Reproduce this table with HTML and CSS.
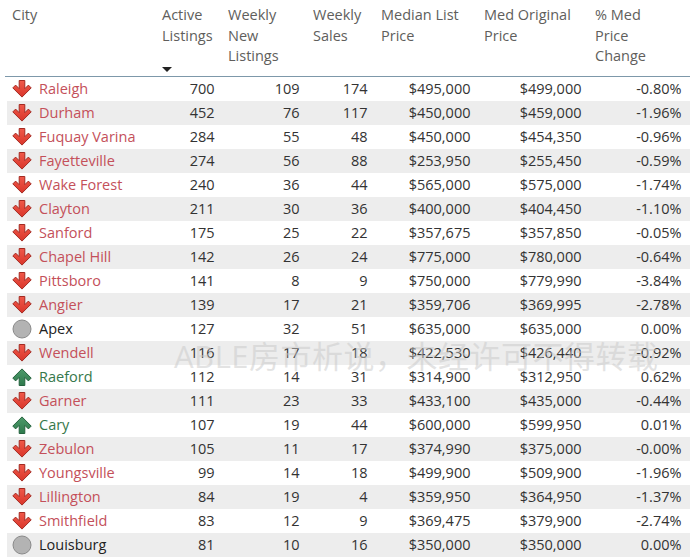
FILE: index.html
```html
<!DOCTYPE html>
<html>
<head>
<meta charset="utf-8">
<link rel="stylesheet" href="styles.css">
</head>
<body>
<svg width="0" height="0" class="defs">
  <defs>
    <linearGradient id="gr" x1="0" y1="0" x2="0" y2="1"><stop offset="0" stop-color="#f0594a"/><stop offset="1" stop-color="#d9352a"/></linearGradient>
    <linearGradient id="gg" x1="0" y1="0" x2="0" y2="1"><stop offset="0" stop-color="#4d9a6a"/><stop offset="1" stop-color="#2e7a4c"/></linearGradient>
    <symbol id="down" viewBox="0 0 20 20"><path d="M7.2 1.5h5.6v8.2l3.6-3.6 2.8 2.8L10 18.1 0.8 8.9l2.8-2.8 3.6 3.6z" fill="url(#gr)" stroke="#a32a22" stroke-width="1" stroke-linejoin="round"/></symbol>
    <symbol id="up" viewBox="0 0 20 20"><path d="M7.2 18.5h5.6v-8.2l3.6 3.6 2.8-2.8L10 1.9 0.8 11.1l2.8 2.8 3.6-3.6z" fill="url(#gg)" stroke="#24623d" stroke-width="1" stroke-linejoin="round"/></symbol>
    <symbol id="dot" viewBox="0 0 20 20"><circle cx="10" cy="10" r="9" fill="#b3b3b3" stroke="#8a8a8a" stroke-width="1"/></symbol>
  </defs>
</svg>
<div class="wrap">
  <div class="table">
    <div class="head">
      <div class="hc">City</div>
      <div class="hc">Active Listings<span class="sort"></span></div>
      <div class="hc">Weekly New Listings</div>
      <div class="hc">Weekly Sales</div>
      <div class="hc">Median List Price</div>
      <div class="hc">Med Original Price</div>
      <div class="hc narrow">% Med Price Change</div>
    </div>
    <div id="rows"></div>
  </div>
  <div class="watermark">ABLE房市析说，未经许可不得转载</div>
</div>
<script src="script.js"></script>
</body>
</html>
```
FILE: script.js
```js
const data = [
["d","Raleigh",700,109,174,"$495,000","$499,000","-0.80%"],
["d","Durham",452,76,117,"$450,000","$459,000","-1.96%"],
["d","Fuquay Varina",284,55,48,"$450,000","$454,350","-0.96%"],
["d","Fayetteville",274,56,88,"$253,950","$255,450","-0.59%"],
["d","Wake Forest",240,36,44,"$565,000","$575,000","-1.74%"],
["d","Clayton",211,30,36,"$400,000","$404,450","-1.10%"],
["d","Sanford",175,25,22,"$357,675","$357,850","-0.05%"],
["d","Chapel Hill",142,26,24,"$775,000","$780,000","-0.64%"],
["d","Pittsboro",141,8,9,"$750,000","$779,990","-3.84%"],
["d","Angier",139,17,21,"$359,706","$369,995","-2.78%"],
["n","Apex",127,32,51,"$635,000","$635,000","0.00%"],
["d","Wendell",116,17,18,"$422,530","$426,440","-0.92%"],
["u","Raeford",112,14,31,"$314,900","$312,950","0.62%"],
["d","Garner",111,23,33,"$433,100","$435,000","-0.44%"],
["u","Cary",107,19,44,"$600,000","$599,950","0.01%"],
["d","Zebulon",105,11,17,"$374,990","$375,000","-0.00%"],
["d","Youngsville",99,14,18,"$499,900","$509,900","-1.96%"],
["d","Lillington",84,19,4,"$359,950","$364,950","-1.37%"],
["d","Smithfield",83,12,9,"$369,475","$379,900","-2.74%"],
["n","Louisburg",81,10,16,"$350,000","$350,000","0.00%"]
];
const icon = {d:"down",u:"up",n:"dot"};
const cls = {d:"red",u:"green",n:"plain"};
const rows = document.getElementById("rows");
rows.innerHTML = data.map(r => {
  const [t, city, ...vals] = r;
  return `<div class="row"><div class="c city"><svg class="ic"><use href="#${icon[t]}"/></svg><span class="${cls[t]}">${city}</span></div>` +
    vals.map(v => `<div class="c num">${v}</div>`).join("") + `</div>`;
}).join("");
```
FILE: styles.css
```css
html, body { margin: 0; padding: 0; background: #fff; }
body {
  font-family: "Open Sans", "Noto Sans", "Noto Sans CJK SC", sans-serif;
  font-size: 14.5px;
  color: #252423;
  width: 690px;
  height: 558px;
  overflow: hidden;
}
.defs { position: absolute; }
.wrap { position: relative; padding-left: 7px; }
.head, .row {
  display: grid;
  grid-template-columns: 150px 66px 85px 68px 103px 111px 100px;
}
.head {
  height: 76px;
  border-bottom: 1.5px solid #7d98aa;
  margin-left: -2px;
  padding-left: 2px;
}
.hc {
  position: relative;
  padding: 5px 6px 0 5px;
  line-height: 20.6px;
  color: #605e5c;
}
.hc.narrow { padding-right: 30px; }
.sort {
  position: absolute;
  left: 5px;
  top: 67px;
  width: 0;
  height: 0;
  border-left: 5px solid transparent;
  border-right: 5px solid transparent;
  border-top: 5px solid #222;
}
.row { height: 24px; align-items: center; }
.row:nth-child(even) { background: #ededed; }
.c { line-height: 24px; white-space: nowrap; }
.num { text-align: right; padding-right: 8.5px; color: #333; }
.city { display: flex; align-items: center; padding-left: 5px; }
.ic { width: 20px; height: 20px; margin-right: 7px; flex: none; }
.red { color: #c4505a; }
.green { color: #36784b; }
.plain { color: #222; }
.watermark {
  position: absolute;
  left: 174px;
  top: 332px;
  font-size: 31px;
  letter-spacing: 0.5px;
  color: rgba(200, 200, 200, 0.5);
  pointer-events: none;
  white-space: nowrap;
}
```
